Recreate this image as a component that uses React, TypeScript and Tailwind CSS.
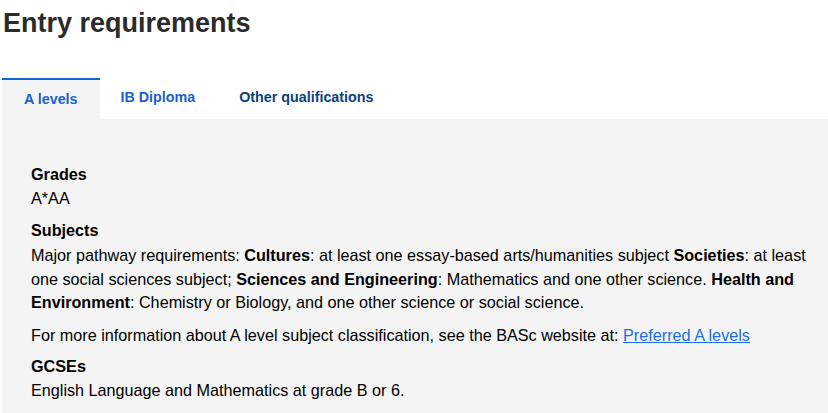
import { useState } from 'react';

const TABS = ['A levels', 'IB Diploma', 'Other qualifications'];

export default function App() {
  const [active, setActive] = useState(0);

  return (
    <div className="min-h-screen bg-white text-black" style={{ fontFamily: '"Liberation Sans", Arial, sans-serif' }}>
      <h1 className="pl-[3px] pt-[8px] text-[27px] font-bold leading-[31px] text-[#2b2b2b]">Entry requirements</h1>

      <div className="mt-[39px] ml-[2px]">
        {/* Tabs */}
        <div className="flex">
          {TABS.map((tab, i) => (
            <button
              key={tab}
              onClick={() => setActive(i)}
              className={
                i === active
                  ? 'h-[41px] border-t-2 border-[#1565d8] bg-[#f4f4f4] px-[22px] pt-[0px] text-[14.3px] font-bold text-[#1662d2]'
                  : i === 1
                    ? 'h-[41px] pl-[21px] pr-[23px] pb-[1px] text-[14.3px] font-bold text-[#1a5fcc]'
                    : 'h-[41px] pl-[21px] pr-[22px] pb-[1px] text-[14.3px] font-bold text-[#0b3f7e]'
              }
            >
              {tab}
            </button>
          ))}
        </div>

        {/* Panel */}
        <div className="bg-[#f4f4f4] pl-[29px] pr-[20px] pt-[43px] pb-[20px] text-[16.2px] leading-[24px]">
          <dl>
            <dt className="font-bold">Grades</dt>
            <dd className="mb-[8px]">A*AA</dd>

            <dt className="font-bold">Subjects</dt>
            <dd className="mb-[7px]">
              <p className="mt-[2px] mb-[8px] leading-[23.5px]">
                Major pathway requirements: <strong>Cultures</strong>: at least one essay-based arts/humanities subject{' '}
                <strong>Societies</strong>: at least one social sciences subject; <strong>Sciences and Engineering</strong>:
                Mathematics and one other science. <strong>Health and Environment</strong>: Chemistry or Biology, and one
                other science or social science.
              </p>
              <p>
                For more information about A level subject classification, see the BASc website at:{' '}
                <a href="#" className="text-[#1a6fe0] underline">
                  Preferred A levels
                </a>
              </p>
            </dd>

            <dt className="font-bold">GCSEs</dt>
            <dd>English Language and Mathematics at grade B or 6.</dd>
          </dl>
        </div>
      </div>
    </div>
  );
}
